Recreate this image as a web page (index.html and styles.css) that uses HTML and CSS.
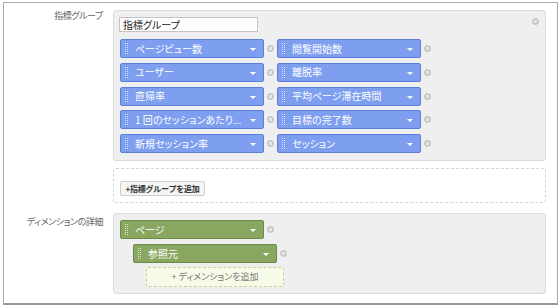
FILE: index.html
```html
<!DOCTYPE html>
<html lang="ja">
<head>
<meta charset="utf-8">
<link rel="stylesheet" href="styles.css">
</head>
<body>
<div class="frame">
  <div class="row">
    <div class="label">指標グループ</div>
    <div class="panel">
      <span class="remove corner"></span>
      <div class="name-input">指標グループ</div>
      <div class="grid">
        <div class="item"><div class="pill blue"><span class="handle"></span><span class="txt">ページビュー数</span><span class="arrow"></span></div><span class="remove"></span></div>
        <div class="item"><div class="pill blue"><span class="handle"></span><span class="txt">閲覧開始数</span><span class="arrow"></span></div><span class="remove"></span></div>
        <div class="item"><div class="pill blue"><span class="handle"></span><span class="txt">ユーザー</span><span class="arrow"></span></div><span class="remove"></span></div>
        <div class="item"><div class="pill blue"><span class="handle"></span><span class="txt">離脱率</span><span class="arrow"></span></div><span class="remove"></span></div>
        <div class="item"><div class="pill blue"><span class="handle"></span><span class="txt">直帰率</span><span class="arrow"></span></div><span class="remove"></span></div>
        <div class="item"><div class="pill blue"><span class="handle"></span><span class="txt">平均ページ滞在時間</span><span class="arrow"></span></div><span class="remove"></span></div>
        <div class="item"><div class="pill blue"><span class="handle"></span><span class="txt">1 回のセッションあたり...</span><span class="arrow"></span></div><span class="remove"></span></div>
        <div class="item"><div class="pill blue"><span class="handle"></span><span class="txt">目標の完了数</span><span class="arrow"></span></div><span class="remove"></span></div>
        <div class="item"><div class="pill blue"><span class="handle"></span><span class="txt">新規セッション率</span><span class="arrow"></span></div><span class="remove"></span></div>
        <div class="item"><div class="pill blue"><span class="handle"></span><span class="txt">セッション</span><span class="arrow"></span></div><span class="remove"></span></div>
      </div>
    </div>
  </div>
  <div class="row add-row">
    <div class="label"></div>
    <div class="add-group">
      <div class="add-btn">+指標グループを追加</div>
    </div>
  </div>
  <div class="row dim-row">
    <div class="label dim-label">ディメンションの詳細</div>
    <div class="panel dim-panel">
      <div class="item"><div class="pill green"><span class="handle"></span><span class="txt">ページ</span><span class="arrow"></span></div><span class="remove"></span></div>
      <div class="item indent1"><div class="pill green"><span class="handle"></span><span class="txt">参照元</span><span class="arrow"></span></div><span class="remove"></span></div>
      <div class="add-dim">+ ディメンションを追加</div>
    </div>
  </div>
</div>
</body>
</html>
```
FILE: styles.css
```css
* { box-sizing: border-box; }
html, body { margin: 0; padding: 0; background: #fff; }
body {
  font-family: "Noto Sans CJK JP", "Noto Sans", "Liberation Sans", sans-serif;
  font-feature-settings: "palt";
}
.frame {
  margin: 2px 0 0 3px;
  width: 555px;
  height: 303px;
  border: 1px solid #a9a9a9;
  border-bottom: 2px solid #999;
  padding-top: 7px;
}
.row { display: flex; align-items: flex-start; }
.label {
  width: 99px;
  text-align: right;
  font-size: 9px;
  letter-spacing: -0.4px;
  line-height: 12px;
  color: #666;
  flex: none;
}
.panel {
  position: relative;
  margin-left: 10px;
  width: 433px;
  background: #efefef;
  border: 1px solid #dcdcdc;
  border-radius: 3px;
  padding: 6px 0 7px 5px;
}
.name-input {
  width: 139px;
  height: 15px;
  background: #fff;
  border: 1px solid #c4c4c4;
  padding: 0 3px;
  font-size: 10px;
  line-height: 13px;
  color: #222;
}
.grid {
  margin-top: 7px;
  padding-left: 1px;
  display: grid;
  grid-template-columns: auto auto;
  justify-content: start;
  row-gap: 4.75px;
}
.item { display: flex; align-items: center; }
.pill {
  position: relative;
  width: 144px;
  height: 19px;
  border: 1px solid;
  border-radius: 2px;
  display: flex;
  align-items: center;
  padding-left: 4px;
  color: #fff;
  font-size: 10px;
  line-height: 12px;
  white-space: nowrap;
}
.blue { background: #7e9ef0; border-color: #5e7ed8; }
.green { background: #8aa762; border-color: #6c8a46; }
.handle {
  width: 3px;
  height: 11px;
  border-left: 1px dotted rgba(255,255,255,0.7);
  border-right: 1px dotted rgba(255,255,255,0.7);
  flex: none;
}
.green .handle {
  border-left-color: rgba(230,245,200,0.85);
  border-right-color: rgba(230,245,200,0.85);
}
.txt { margin-left: 7px; }
.arrow {
  position: absolute;
  right: 7px;
  top: 8px;
  width: 0;
  height: 0;
  border-left: 3px solid transparent;
  border-right: 3px solid transparent;
  border-top: 3px solid #fff;
}
.remove {
  flex: none;
  width: 7px;
  height: 7px;
  margin: 0 3px;
  border-radius: 50%;
  background: radial-gradient(circle, #e6e6e6 0 1.5px, #c6c6c6 2px);
  border: 1px solid #c0c0c0;
}
.corner {
  position: absolute;
  top: 7px;
  right: 6px;
  margin: 0;
}
.add-row { margin-top: 7px; }
.add-group {
  margin-left: 10px;
  width: 433px;
  height: 35px;
  border: 1px dashed #d6d6d6;
  border-radius: 3px;
  padding: 12px 0 0 6px;
}
.add-btn {
  display: block;
  width: 85px;
  height: 15px;
  background: #f5f5f5;
  border: 1px solid #cfcfcf;
  border-radius: 2px;
  font-size: 8px;
  line-height: 13px;
  font-weight: bold;
  color: #333;
  text-align: center;
  font-feature-settings: normal;
  letter-spacing: -0.2px;
}
.dim-row { margin-top: 10px; }
.dim-label { padding-top: 3px; }
.dim-panel { padding: 6px 0 6px 6px; }
.indent1 { margin-left: 13px; margin-top: 5px; }
.add-dim {
  margin-left: 26px;
  margin-top: 4px;
  width: 138px;
  height: 20px;
  background: #f6fbe8;
  border: 1px dashed #c3d39c;
  border-radius: 2px;
  font-size: 9px;
  line-height: 18px;
  color: #777;
  text-align: center;
}
```
